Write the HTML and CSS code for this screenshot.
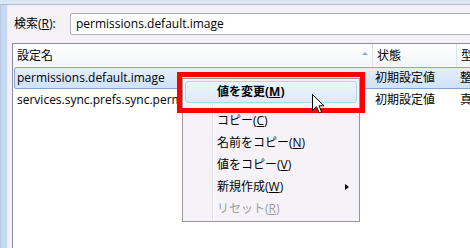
FILE: index.html
```html
<!DOCTYPE html>
<html lang="ja">
<head>
<meta charset="utf-8">
<title>about:config</title>
<link rel="stylesheet" href="styles.css">
</head>
<body>
<div class="shell">
  <div class="topbar"></div>
  <div class="main">
    <div class="sideframe"></div>
    <div class="content">
      <div class="search">
        <span class="search-label">検索(<u>R</u>):</span>
        <div class="search-input">permissions.default.image</div>
      </div>
      <div class="listbox">
        <div class="list-head">
          <div class="hcell hcell-name">設定名<span class="sort"></span></div>
          <div class="hcell">状態</div>
          <div class="hcell">型</div>
        </div>
        <div class="row selected">
          <div class="cell c1">permissions.default.image</div>
          <div class="cell c2">初期設定値</div>
          <div class="cell c3">整数値</div>
        </div>
        <div class="row">
          <div class="cell c1">services.sync.prefs.sync.permissions.default.image</div>
          <div class="cell c2">初期設定値</div>
          <div class="cell c3">真偽値</div>
        </div>
      </div>
    </div>
  </div>

  <div class="menu">
    <div class="mi hot"><b>値を変更(<u>M</u>)</b></div>
    <div class="msep"></div>
    <div class="mi">コピー(<u>C</u>)</div>
    <div class="mi">名前をコピー(<u>N</u>)</div>
    <div class="mi">値をコピー(<u>V</u>)</div>
    <div class="mi sub">新規作成(<u>W</u>)<span class="arrow"></span></div>
    <div class="mi disabled">リセット(<u>R</u>)</div>
  </div>

  <div class="callout"></div>

  <svg class="cursor" width="13" height="20" viewBox="0 0 13 20">
    <path d="M0.5 0.5 L0.5 16.5 L4.5 12.7 L7.2 18.8 L9.6 17.8 L7 11.8 L12 11.8 Z" fill="#fff" stroke="#000" stroke-width="1" stroke-linejoin="miter"/>
  </svg>
</div>
</body>
</html>
```

FILE: styles.css
```css
* { box-sizing: border-box; }

html, body {
  margin: 0;
  padding: 0;
  background: #f4f2f7;
}

body {
  font-family: "Open Sans", "Noto Sans CJK JP", sans-serif;
  font-size: 12px;
  color: #000;
}

.shell {
  position: relative;
  width: 470px;
  height: 248px;
  overflow: hidden;
  display: flex;
  flex-direction: column;
  background: #f4f2f7;
}

.topbar {
  height: 5px;
  flex: 0 0 5px;
  background: #dbe6f5;
  border-bottom: 1px solid #aebdd2;
}

.main {
  flex: 1;
  display: flex;
  min-height: 0;
}

.sideframe {
  flex: 0 0 8px;
  background: linear-gradient(to right, #b3c8e3 0, #b3c8e3 1px, #c6d9f1 1px, #c6d9f1 7px, #e8eef7 7px);
}

.content {
  flex: 1;
  min-width: 0;
  padding: 8px 0 0 4px;
  display: flex;
  flex-direction: column;
}

.search {
  display: flex;
  align-items: center;
  height: 22px;
  margin-right: -30px;
}

.search-label {
  flex: 0 0 58px;
  padding-left: 2px;
  line-height: 22px;
}

.search-input {
  flex: 1;
  height: 22px;
  line-height: 20px;
  padding-left: 5px;
  background: #fff;
  border: 1px solid #b4b6bd;
  border-top-color: #a9abb2;
  border-radius: 2px;
}

.listbox {
  margin-top: 8px;
  margin-right: -30px;
  flex: 1;
  margin-bottom: -10px;
  background: #fff;
  border: 1px solid #8e8c9c;
}

.list-head {
  display: grid;
  grid-template-columns: 360px 84px 1fr;
  height: 22px;
  background: linear-gradient(#ffffff, #f4f5f7);
  margin-bottom: 1px;
}

.hcell {
  position: relative;
  padding-left: 4px;
  line-height: 23px;
  border-right: 1px solid #dfe2e7;
}

.sort {
  position: absolute;
  right: 4px;
  top: 8px;
  width: 0;
  height: 0;
  border-left: 3px solid transparent;
  border-right: 3px solid transparent;
  border-bottom: 3px solid #8aa6c6;
}

.row {
  display: grid;
  grid-template-columns: 358px 84px 1fr;
  height: 22px;
  margin-left: 1px;
  border: 1px solid transparent;
  border-radius: 2px;
  line-height: 20px;
  white-space: nowrap;
}

.row.selected {
  background: linear-gradient(#e4eefb, #d0e2f8);
  border-color: #84a5d0;
}

.cell { overflow: hidden; }
.c1 { padding-left: 2px; }
.c2 { padding-left: 2px; }
.c3 { padding-left: 3px; }

/* Context menu overlay */
.menu {
  position: absolute;
  left: 182px;
  top: 78px;
  width: 178px;
  height: 144px;
  padding: 2px 2px 1px 2px;
  background:
    linear-gradient(to right, transparent 29px, #e2e1e6 29px, #e2e1e6 30px, #ffffff 30px, #ffffff 31px, transparent 31px),
    #f5f3f7;
  border: 1px solid #979797;
}

.mi {
  position: relative;
  height: 22px;
  line-height: 22px;
  padding-left: 32px;
  white-space: nowrap;
}

.mi.hot {
  line-height: 20px;
  border: 1px solid #a8d7f2;
  border-radius: 3px;
  padding-left: 31px;
  background: linear-gradient(#edf5fc, #dbeaf8);
}

.msep { height: 7px; }

.mi.disabled { color: #9d9d9d; }

.arrow {
  position: absolute;
  right: 8px;
  top: 8px;
  width: 0;
  height: 0;
  border-top: 3.5px solid transparent;
  border-bottom: 3.5px solid transparent;
  border-left: 4px solid #000;
}

.callout {
  position: absolute;
  left: 177px;
  top: 72px;
  width: 188px;
  height: 41px;
  border: 5px solid #ff0000;
}

.cursor {
  position: absolute;
  left: 312px;
  top: 94px;
}
```
